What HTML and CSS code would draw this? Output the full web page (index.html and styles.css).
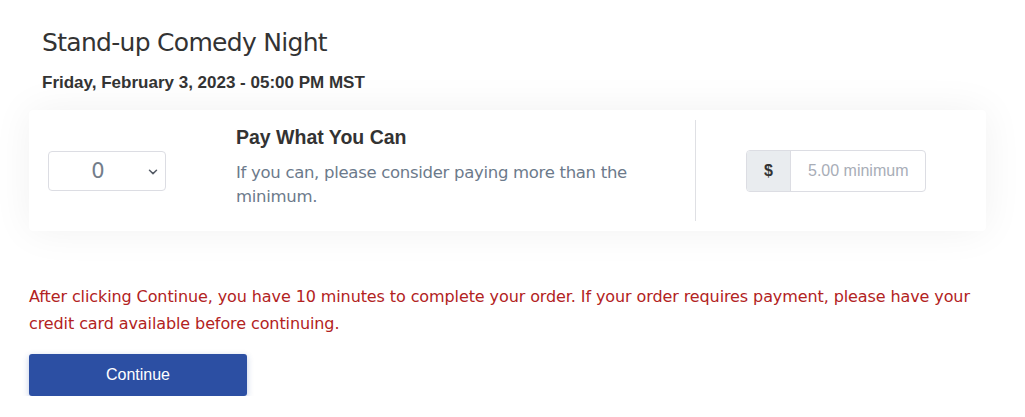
FILE: index.html
```html
<!DOCTYPE html>
<html>
<head>
<meta charset="utf-8">
<link rel="stylesheet" href="styles.css">
</head>
<body>
<div class="page">
  <div class="event-head">
    <h1 class="event-title">Stand-up Comedy Night</h1>
    <div class="event-date">Friday, February 3, 2023 - 05:00 PM MST</div>
  </div>
  <div class="ticket-card">
    <div class="qty-col">
      <div class="qty-select">
        <span class="qty-value">0</span>
        <svg class="qty-chevron" width="10" height="6" viewBox="0 0 10 6"><path d="M1.5 1.2 L5 4.6 L8.5 1.2" fill="none" stroke="#555b66" stroke-width="1.5" stroke-linecap="round" stroke-linejoin="round"/></svg>
      </div>
    </div>
    <div class="info-col">
      <div class="ticket-name">Pay What You Can</div>
      <div class="ticket-desc">If you can, please consider paying more than the minimum.</div>
    </div>
    <div class="divider"></div>
    <div class="price-col">
      <div class="input-group">
        <span class="addon">$</span>
        <span class="amount">5.00 minimum</span>
      </div>
    </div>
  </div>
  <p class="notice">After clicking Continue, you have 10 minutes to complete your order. If your order requires payment, please have your credit card available before continuing.</p>
  <button class="continue-btn">Continue</button>
</div>
</body>
</html>
```
FILE: styles.css
```css
html, body {
  margin: 0;
  padding: 0;
  background: #ffffff;
}
.page {
  padding: 0 39px 0 29px;
}
.event-head {
  padding: 26px 0 0 13px;
}
.event-title {
  margin: 0;
  font-family: "DejaVu Sans", sans-serif;
  font-weight: normal;
  font-size: 25px;
  line-height: 34px;
  color: #333333;
  letter-spacing: -0.7px;
}
.event-date {
  margin-top: 13px;
  font-family: "Liberation Sans", Arial, sans-serif;
  font-weight: bold;
  font-size: 17px;
  line-height: 20px;
  color: #333333;
}
.ticket-card {
  margin-top: 17px;
  display: flex;
  align-items: stretch;
  background: #ffffff;
  border-radius: 4px;
  box-shadow: 0 0 40px rgba(0, 0, 0, 0.06);
  padding: 10px 0;
  height: 101px;
}
.qty-col {
  width: 207px;
  padding-left: 19px;
  box-sizing: border-box;
  display: flex;
  align-items: center;
}
.qty-select {
  width: 118px;
  height: 40px;
  box-sizing: border-box;
  border: 1px solid #dcdde3;
  border-radius: 4px;
  display: flex;
  align-items: center;
  position: relative;
}
.qty-value {
  flex: 1;
  text-align: center;
  font-family: "DejaVu Sans", sans-serif;
  font-size: 21px;
  color: #737d8a;
  padding-right: 18px;
}
.qty-chevron {
  position: absolute;
  right: 7px;
  top: 17px;
}
.info-col {
  width: 459px;
  padding-top: 5px;
  box-sizing: border-box;
}
.ticket-name {
  font-family: "Liberation Sans", Arial, sans-serif;
  font-weight: bold;
  font-size: 19.5px;
  line-height: 24px;
  color: #333333;
}
.ticket-desc {
  margin-top: 12px;
  font-family: "DejaVu Sans", sans-serif;
  font-size: 16.5px;
  line-height: 24px;
  color: #6c7a8b;
  width: 400px;
  letter-spacing: -0.3px;
}
.divider {
  width: 1px;
  background: #dfe0e4;
}
.price-col {
  flex: 1;
  display: flex;
  align-items: center;
  justify-content: center;
  padding-right: 10px;
}
.input-group {
  display: flex;
  width: 180px;
  height: 42px;
  box-sizing: border-box;
  border: 1px solid #dcdde3;
  border-radius: 4px;
  overflow: hidden;
}
.addon {
  width: 43px;
  background: #e9ecef;
  border-right: 1px solid #dcdde3;
  display: flex;
  align-items: center;
  justify-content: center;
  font-family: "Liberation Sans", Arial, sans-serif;
  font-weight: bold;
  font-size: 16px;
  color: #333333;
}
.amount {
  flex: 1;
  display: flex;
  align-items: center;
  padding-left: 17px;
  font-family: "Liberation Sans", Arial, sans-serif;
  font-size: 16px;
  color: #a8adb7;
}
.notice {
  margin: 52px 0 0 0;
  font-family: "DejaVu Sans", sans-serif;
  font-size: 16px;
  line-height: 27px;
  color: #b22222;
  letter-spacing: -0.1px;
}
.continue-btn {
  margin-top: 17px;
  width: 218px;
  height: 42px;
  border: none;
  border-radius: 3px;
  background: #2c4fa3;
  color: #ffffff;
  font-family: "Liberation Sans", Arial, sans-serif;
  font-size: 16px;
  box-shadow: 0 2px 6px rgba(44, 79, 163, 0.3);
}
```
